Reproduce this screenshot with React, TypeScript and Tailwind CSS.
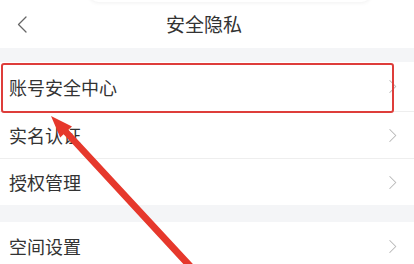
const font = { fontFamily: '"Noto Sans CJK SC", "Noto Sans", sans-serif' };

function Chevron({ left = false, className }: { left?: boolean; className?: string }) {
  return (
    <svg className={className} viewBox="0 0 10 17" fill="none" stroke="currentColor" strokeWidth={1.3} strokeLinecap="round" strokeLinejoin="round">
      <path d={left ? "M9 1 L1.5 8.5 L9 16" : "M1 1 L8.5 8.5 L1 16"} />
    </svg>
  );
}

function Row({ label, h, divider = true }: { label: string; h: string; divider?: boolean }) {
  return (
    <div className={`flex items-center justify-between bg-white pl-[9px] pr-[17px] ${h} ${divider ? "border-b border-[#eeeeee]" : ""}`}>
      <span className="text-[18px] leading-none text-[#333333]">{label}</span>
      <Chevron className="h-[15px] w-[8px] text-[#b8b8b8]" />
    </div>
  );
}

export default function App() {
  return (
    <div className="relative h-[264px] w-[414px] overflow-hidden bg-[#f4f5f7]" style={font}>
      {/* faint shadow of the sheet above */}
      <div className="absolute left-[88px] top-[-20px] z-10 h-[22px] w-[284px] rounded-full bg-white shadow-[0_1px_4px_rgba(0,0,0,0.06)]" />

      {/* header */}
      <div className="flex h-[48px] items-center justify-between bg-white px-[17px]">
        <Chevron left className="h-[17px] w-[10px] text-[#666666]" />
        <span className="pr-[6px] text-[19px] text-[#333333]">安全隐私</span>
        <div className="w-[10px]" />
      </div>

      <div className="h-[14px]" />

      <Row label="账号安全中心" h="h-[50px]" />
      <Row label="实名认证" h="h-[47px]" />
      <Row label="授权管理" h="h-[46px]" divider={false} />

      <div className="h-[17px]" />

      <Row label="空间设置" h="h-[48px]" divider={false} />

      {/* red highlight box */}
      <div className="absolute left-[1px] top-[63px] h-[50px] w-[393px] rounded-[3px] border-[2.5px] border-[#de3d3a]" />

      {/* arrow */}
      <svg className="absolute left-0 top-0" width="414" height="264" viewBox="0 0 414 264">
        <polygon
          points="51,116 72,126.5 68.4,129.7 198,269.5 193,274.5 63.6,134.3 60.2,137.5"
          fill="#e6382c"
        />
      </svg>
    </div>
  );
}
